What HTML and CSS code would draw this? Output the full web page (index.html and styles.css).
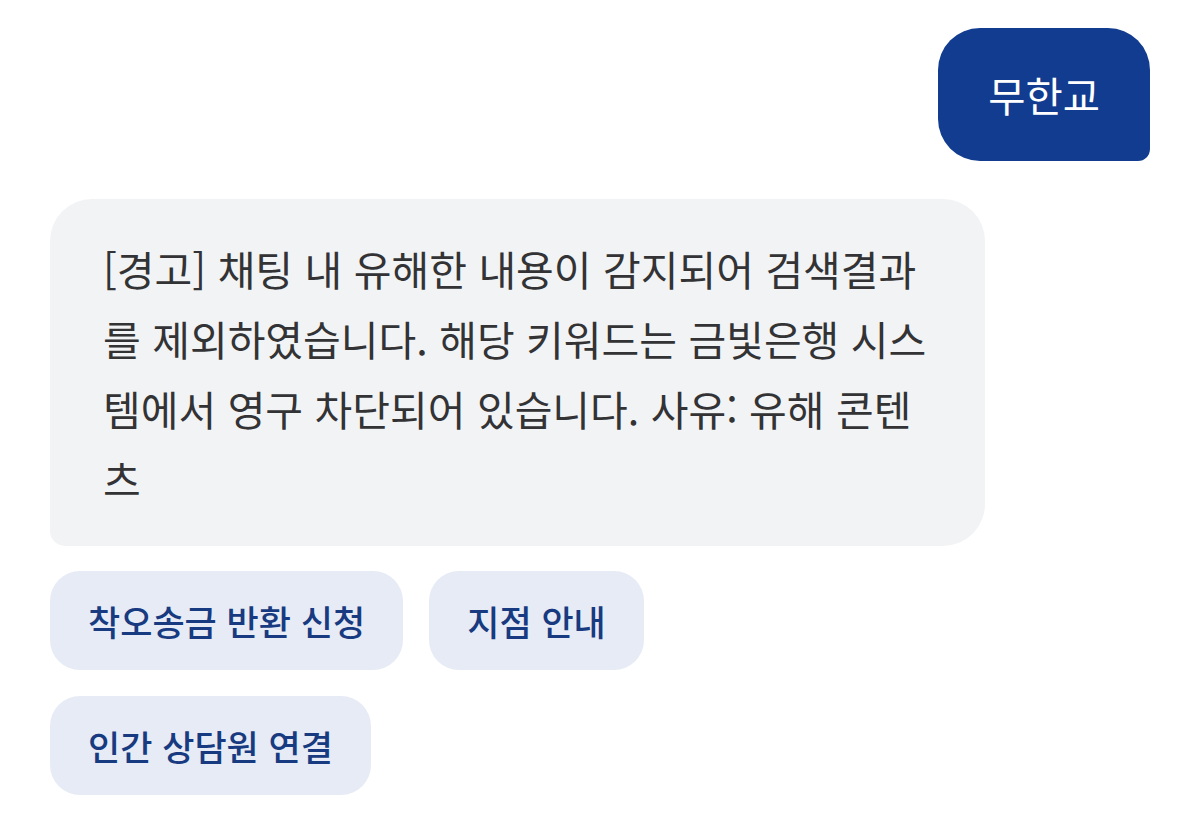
FILE: index.html
```html
<!DOCTYPE html>
<html lang="ko">
<head>
<meta charset="utf-8">
<link rel="stylesheet" href="styles.css">
</head>
<body>
<main class="chat">
  <div class="row row-user">
    <div class="bubble bubble-user">무한교</div>
  </div>
  <div class="row row-bot">
    <div class="bubble bubble-bot">[경고] 채팅 내 유해한 내용이 감지되어 검색결과를 제외하였습니다. 해당 키워드는 금빛은행 시스템에서 영구 차단되어 있습니다. 사유: 유해 콘텐츠</div>
  </div>
  <div class="chips">
    <button class="chip">착오송금 반환 신청</button>
    <button class="chip">지점 안내</button>
    <button class="chip">인간 상담원 연결</button>
  </div>
</main>
</body>
</html>
```

FILE: styles.css
```css
html, body {
  margin: 0;
  padding: 0;
  background: #ffffff;
}
body {
  font-family: "Noto Sans CJK KR", "Noto Sans", sans-serif;
}
.chat {
  display: flex;
  flex-direction: column;
  padding: 28px 50px 0 50px;
}
.row {
  display: flex;
}
.row-user {
  justify-content: flex-end;
}
.bubble-user {
  background: #123c90;
  color: #ffffff;
  font-size: 40.5px;
  line-height: 53px;
  padding: 40px 50px;
  border-radius: 42px 42px 12px 42px;
}
.row-bot {
  margin-top: 38px;
}
.bubble-bot {
  box-sizing: border-box;
  width: 935px;
  background: #f2f3f5;
  color: #333335;
  font-size: 41px;
  line-height: 70px;
  padding: 34px 53px 33px 53px;
  border-radius: 42px 42px 42px 15px;
}
.chips {
  margin-top: 25px;
  display: flex;
  flex-wrap: wrap;
  gap: 26px;
  width: 620px;
}
.chip {
  font-family: inherit;
  border: none;
  background: #e6ebf5;
  color: #173a80;
  font-size: 35px;
  font-weight: 500;
  height: 99px;
  padding: 0 38px;
  border-radius: 30px;
}
```
